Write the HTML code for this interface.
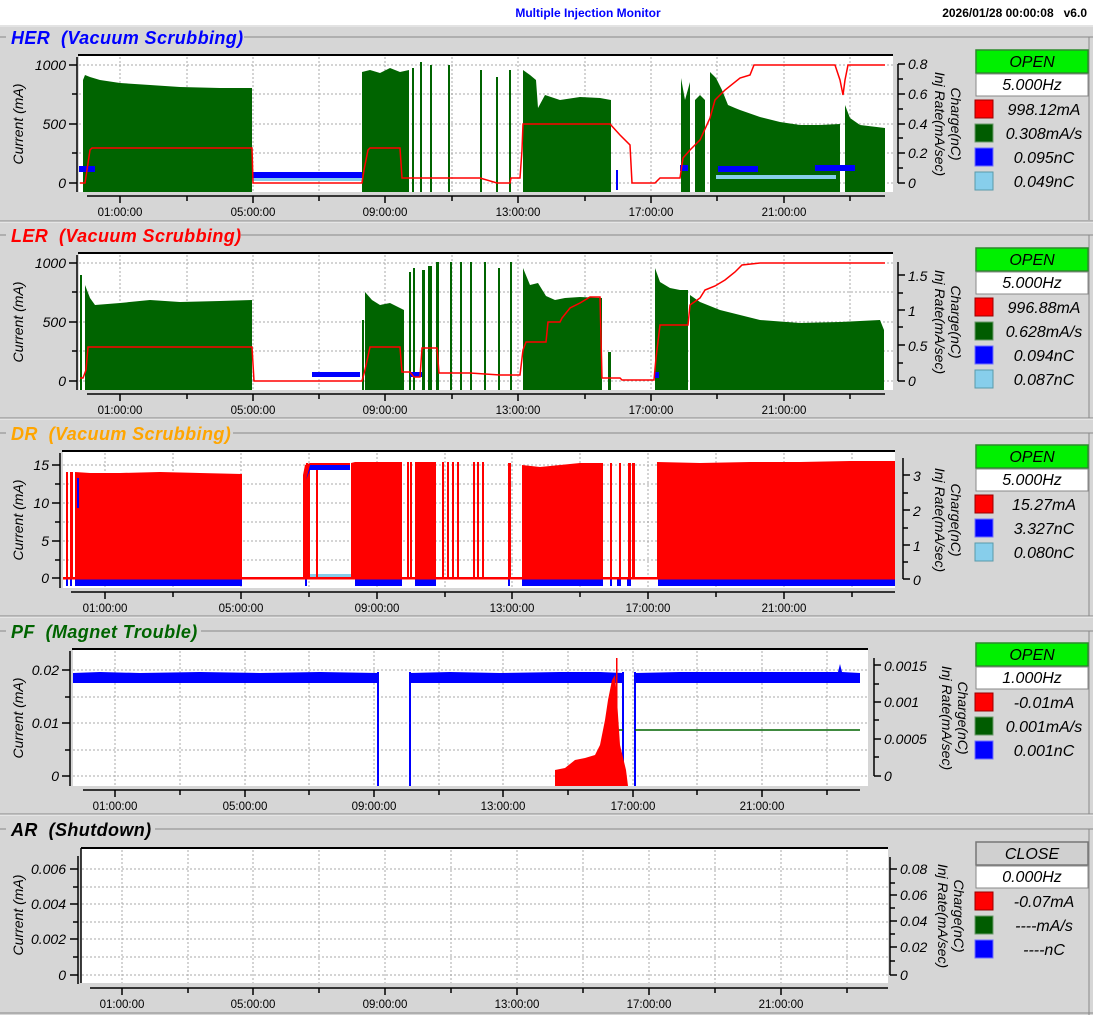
<!DOCTYPE html>
<html><head><meta charset="utf-8"><style>
html,body{margin:0;padding:0;background:#d6d6d6;width:1093px;height:1015px;overflow:hidden}
svg{display:block}
text{font-family:"Liberation Sans",sans-serif}
.t{font-size:18px;font-weight:bold;font-style:italic;letter-spacing:0.4px}
.yl{font-size:14px;font-style:italic}
.xl{font-size:11.5px}
.lg{font-size:16px;font-style:italic}
.ax{stroke:#000;stroke-width:1.5;fill:none}
.gr{stroke:#aaa;stroke-width:1;stroke-dasharray:2,2;fill:none}
</style></head><body>
<svg width="1093" height="1015" viewBox="0 0 1093 1015">
<rect x="0" y="0" width="1093" height="25" fill="#fff"/>
<text x="588" y="17" text-anchor="middle" style="font-size:12px;font-weight:bold" fill="#0000ff">Multiple Injection Monitor</text>
<text x="1087" y="17" text-anchor="end" style="font-size:12px;font-weight:bold">2026/01/28 00:00:08&#160;&#160;&#160;v6.0</text>

<!-- ===== HER ===== -->
<g>
<line x1="0" y1="26" x2="1093" y2="26" stroke="#f0f0f0"/>
<line x1="0" y1="37" x2="6" y2="37" stroke="#888"/><line x1="244" y1="37" x2="1093" y2="37" stroke="#888"/>
<line x1="1089" y1="37" x2="1089" y2="220" stroke="#888"/>
<text x="11" y="44" class="t" fill="#0000ff">HER&#160;&#160;(Vacuum Scrubbing)</text>
<rect x="79" y="56" width="814" height="136" fill="#fff"/>
<line x1="78" y1="55" x2="893" y2="55" stroke="#000" stroke-width="2"/>
<g class="gr"><path d="M120 57V192M187 57V192M253 57V192M319 57V192M385 57V192M452 57V192M518 57V192M585 57V192M651 57V192M717 57V192M784 57V192M850 57V192M79 65H893M79 94H893M79 124H893M79 153H893M79 183H893"/></g>
<g fill="#006400">
<path d="M83 192V80L85 75 90 77 100 80 120 83 150 85 180 87 220 88 252 88V192Z"/>
<path d="M362 192V72L370 70 380 73 390 68 400 72 409 70V192Z"/>
<rect x="412" y="68" width="2" height="124"/><rect x="420" y="62" width="2" height="130"/><rect x="430" y="65" width="2" height="127"/><rect x="448" y="65" width="2" height="127"/><rect x="480" y="70" width="2" height="122"/><rect x="496" y="77" width="2" height="115"/><rect x="509" y="70" width="2" height="122"/>
<path d="M523 192V70L530 75 536 80 538 108 545 95 560 100 580 97 600 98 611 100V192Z"/>
<path d="M681 192V78L685 100 690 82V192ZM695 192V100L700 95 705 100V192ZM710 192V72L716 78 722 90 728 105 735 108 740 110 760 117 780 122 800 125 820 125 840 124V192ZM845 192V105L850 118 860 125 885 128V192Z"/>
</g>
<g fill="#0000ff"><rect x="79" y="166" width="16" height="6"/><rect x="252" y="172" width="110" height="6"/><rect x="680" y="165" width="8" height="6"/><rect x="718" y="166" width="40" height="6"/><rect x="815" y="165" width="40" height="6"/><rect x="616" y="170" width="2" height="20"/></g>
<g fill="#87ceeb"><rect x="252" y="178" width="110" height="3"/><rect x="716" y="175" width="120" height="4"/></g>
<polyline fill="none" stroke="#f00" stroke-width="1.5" points="80,183 85,183 87,170 90,150 92,148 252,148 253,183 362,183 364,170 368,150 370,148 400,148 402,178 480,178 497,183 510,183 511,178 520,178 522,150 523,124 610,124 620,135 630,145 632,183 655,183 660,178 680,178 683,158 690,150 700,140 710,118 715,100 725,90 740,78 750,75 754,65 835,65 840,80 843,95 845,80 848,65 885,65"/>
<line x1="77" y1="57" x2="77" y2="192" class="ax"/>
<path d="M69 65H77M72 94H77M69 124H77M72 153H77M69 183H77" class="ax"/>
<text x="66" y="70" class="yl" text-anchor="end">1000</text><text x="66" y="129" class="yl" text-anchor="end">500</text><text x="66" y="188" class="yl" text-anchor="end">0</text>
<text transform="translate(23,124) rotate(-90)" class="yl" text-anchor="middle">Current (mA)</text>
<line x1="87" y1="196" x2="885" y2="196" class="ax"/>
<path d="M120 196V203M187 196V201M253 196V203M319 196V201M385 196V203M452 196V201M518 196V203M585 196V201M651 196V203M717 196V201M784 196V203M850 196V201" class="ax"/>
<text x="120" y="216" class="xl" text-anchor="middle">01:00:00</text><text x="253" y="216" class="xl" text-anchor="middle">05:00:00</text><text x="385" y="216" class="xl" text-anchor="middle">09:00:00</text><text x="518" y="216" class="xl" text-anchor="middle">13:00:00</text><text x="651" y="216" class="xl" text-anchor="middle">17:00:00</text><text x="784" y="216" class="xl" text-anchor="middle">21:00:00</text>
<line x1="898" y1="64" x2="898" y2="183" class="ax"/>
<path d="M898 64H905M898 79H903M898 94H905M898 109H903M898 124H905M898 138H903M898 153H905M898 168H903M898 183H905" class="ax"/>
<text x="908" y="69" class="yl">0.8</text><text x="908" y="99" class="yl">0.6</text><text x="908" y="129" class="yl">0.4</text><text x="908" y="158" class="yl">0.2</text><text x="908" y="188" class="yl">0</text>
<text transform="translate(935,124) rotate(90)" class="yl" text-anchor="middle">Inj Rate(mA/sec)</text>
<text transform="translate(951,124) rotate(90)" class="yl" text-anchor="middle">Charge(nC)</text>
<rect x="976" y="50" width="112" height="23" fill="#00f000" stroke="#2a8a2a" stroke-width="1.5"/>
<text x="1032" y="67" class="lg" text-anchor="middle">OPEN</text>
<rect x="976" y="74" width="112" height="22" fill="#fff" stroke="#888" stroke-width="1"/>
<text x="1032" y="90" class="lg" text-anchor="middle">5.000Hz</text>
<rect x="975" y="100" width="18" height="18" fill="#f00" stroke="#900"/><text x="1044" y="115" class="lg" text-anchor="middle">998.12mA</text>
<rect x="975" y="124" width="18" height="18" fill="#005c00" stroke="#6a9a6a"/><text x="1044" y="139" class="lg" text-anchor="middle">0.308mA/s</text>
<rect x="975" y="148" width="18" height="18" fill="#00f" stroke="#7070ff"/><text x="1044" y="163" class="lg" text-anchor="middle">0.095nC</text>
<rect x="975" y="172" width="18" height="18" fill="#87ceeb" stroke="#5a9aaa"/><text x="1044" y="187" class="lg" text-anchor="middle">0.049nC</text>
</g>

<!-- ===== LER ===== -->
<g>
<line x1="0" y1="221" x2="1093" y2="221" stroke="#888"/><line x1="0" y1="222" x2="1093" y2="222" stroke="#f4f4f4"/>
<line x1="0" y1="235" x2="6" y2="235" stroke="#888"/><line x1="241" y1="235" x2="1093" y2="235" stroke="#888"/>
<line x1="1089" y1="235" x2="1089" y2="418" stroke="#888"/>
<text x="11" y="242" class="t" fill="#ff0000">LER&#160;&#160;(Vacuum Scrubbing)</text>
<rect x="79" y="254" width="814" height="136" fill="#fff"/>
<line x1="78" y1="253" x2="893" y2="253" stroke="#000" stroke-width="2"/>
<g class="gr"><path d="M120 255V390M187 255V390M253 255V390M319 255V390M385 255V390M452 255V390M518 255V390M585 255V390M651 255V390M717 255V390M784 255V390M850 255V390M79 263H893M79 292H893M79 322H893M79 351H893M79 381H893"/></g>
<g fill="#006400">
<rect x="80" y="275" width="2" height="115"/>
<path d="M85 390V285L90 298 95 305 120 303 150 300 180 302 220 301 252 300V390Z"/>
<rect x="362" y="320" width="2" height="70"/>
<path d="M365 390V292L372 300 380 305 390 303 404 310V390Z"/>
<rect x="409" y="272" width="2" height="118"/><rect x="413" y="268" width="2" height="122"/><rect x="422" y="270" width="3" height="120"/><rect x="428" y="266" width="4" height="124"/><rect x="436" y="262" width="3" height="128"/><rect x="450" y="262" width="2" height="128"/><rect x="460" y="262" width="2" height="128"/><rect x="470" y="262" width="2" height="128"/><rect x="484" y="262" width="2" height="128"/><rect x="498" y="268" width="2" height="122"/><rect x="510" y="262" width="2" height="128"/>
<path d="M523 390V268L530 285 538 283 546 296 555 300 565 298 580 297 602 298V390Z"/>
<rect x="608" y="352" width="3" height="38"/>
<path d="M655 390V268L660 282 670 288 680 290 688 290V390ZM690 390V295L700 302 720 310 740 315 760 320 800 323 840 322 880 320 884 330V390Z"/>
</g>
<g fill="#0000ff"><rect x="312" y="372" width="48" height="5"/><rect x="410" y="372" width="12" height="5"/><rect x="655" y="372" width="4" height="6"/></g>
<polyline fill="none" stroke="#f00" stroke-width="1.5" points="80,378 83,378 86,370 88,347 252,347 254,381 362,381 365,370 370,347 400,347 402,372 410,372 414,377 420,377 422,348 437,348 439,373 470,373 500,375 520,375 523,350 526,342 546,342 548,322 560,322 562,318 570,308 580,303 590,297 600,297 602,378 620,378 622,380 654,380 656,358 660,325 688,325 690,305 700,298 705,290 715,286 725,280 735,272 742,265 760,263 885,263"/>
<line x1="77" y1="255" x2="77" y2="390" class="ax"/>
<path d="M69 263H77M72 292H77M69 322H77M72 351H77M69 381H77" class="ax"/>
<text x="66" y="268" class="yl" text-anchor="end">1000</text><text x="66" y="327" class="yl" text-anchor="end">500</text><text x="66" y="386" class="yl" text-anchor="end">0</text>
<text transform="translate(23,322) rotate(-90)" class="yl" text-anchor="middle">Current (mA)</text>
<line x1="87" y1="394" x2="885" y2="394" class="ax"/>
<path d="M120 394V401M187 394V399M253 394V401M319 394V399M385 394V401M452 394V399M518 394V401M585 394V399M651 394V401M717 394V399M784 394V401M850 394V399" class="ax"/>
<text x="120" y="414" class="xl" text-anchor="middle">01:00:00</text><text x="253" y="414" class="xl" text-anchor="middle">05:00:00</text><text x="385" y="414" class="xl" text-anchor="middle">09:00:00</text><text x="518" y="414" class="xl" text-anchor="middle">13:00:00</text><text x="651" y="414" class="xl" text-anchor="middle">17:00:00</text><text x="784" y="414" class="xl" text-anchor="middle">21:00:00</text>
<line x1="898" y1="262" x2="898" y2="381" class="ax"/>
<path d="M898 275H905M898 293H903M898 310H905M898 327H903M898 345H905M898 363H903M898 381H905" class="ax"/>
<text x="908" y="281" class="yl">1.5</text><text x="908" y="316" class="yl">1</text><text x="908" y="351" class="yl">0.5</text><text x="908" y="386" class="yl">0</text>
<text transform="translate(935,322) rotate(90)" class="yl" text-anchor="middle">Inj Rate(mA/sec)</text>
<text transform="translate(951,322) rotate(90)" class="yl" text-anchor="middle">Charge(nC)</text>
<rect x="976" y="248" width="112" height="23" fill="#00f000" stroke="#2a8a2a" stroke-width="1.5"/>
<text x="1032" y="265" class="lg" text-anchor="middle">OPEN</text>
<rect x="976" y="272" width="112" height="22" fill="#fff" stroke="#888"/>
<text x="1032" y="288" class="lg" text-anchor="middle">5.000Hz</text>
<rect x="975" y="298" width="18" height="18" fill="#f00" stroke="#900"/><text x="1044" y="313" class="lg" text-anchor="middle">996.88mA</text>
<rect x="975" y="322" width="18" height="18" fill="#005c00" stroke="#6a9a6a"/><text x="1044" y="337" class="lg" text-anchor="middle">0.628mA/s</text>
<rect x="975" y="346" width="18" height="18" fill="#00f" stroke="#7070ff"/><text x="1044" y="361" class="lg" text-anchor="middle">0.094nC</text>
<rect x="975" y="370" width="18" height="18" fill="#87ceeb" stroke="#5a9aaa"/><text x="1044" y="385" class="lg" text-anchor="middle">0.087nC</text>
</g>

<!-- ===== DR ===== -->
<g>
<line x1="0" y1="418" x2="1093" y2="418" stroke="#888"/><line x1="0" y1="419" x2="1093" y2="419" stroke="#f4f4f4"/>
<line x1="0" y1="433" x2="6" y2="433" stroke="#888"/><line x1="233" y1="433" x2="1093" y2="433" stroke="#888"/>
<line x1="1089" y1="433" x2="1089" y2="616" stroke="#888"/>
<text x="11" y="440" class="t" fill="#ffa500">DR&#160;&#160;(Vacuum Scrubbing)</text>
<rect x="63" y="452" width="832" height="136" fill="#fff"/>
<line x1="62" y1="451" x2="895" y2="451" stroke="#000" stroke-width="2"/>
<g class="gr"><path d="M105 453V588M173 453V588M241 453V588M309 453V588M377 453V588M445 453V588M512 453V588M580 453V588M648 453V588M716 453V588M784 453V588M852 453V588M63 465H895M63 484H895M63 503H895M63 522H895M63 541H895M63 560H895M63 578H895"/></g>
<g fill="#0000ff"><rect x="66" y="578" width="2" height="8"/><rect x="70" y="578" width="2" height="8"/><rect x="75" y="578" width="167" height="8"/><rect x="305" y="578" width="2" height="8"/><rect x="355" y="578" width="47" height="8"/><rect x="415" y="578" width="21" height="8"/><rect x="508" y="578" width="2" height="8"/><rect x="522" y="578" width="81" height="8"/><rect x="610" y="578" width="2" height="8"/><rect x="617" y="578" width="4" height="8"/><rect x="627" y="578" width="4" height="8"/><rect x="658" y="578" width="237" height="8"/></g>
<rect x="303" y="574" width="52" height="3" fill="#87ceeb"/>
<g fill="#f00">
<rect x="63" y="577" width="832" height="2.5"/>
<rect x="66" y="472" width="2" height="106"/><rect x="70" y="472" width="3" height="106"/>
<path d="M75 578V472L90 473 120 473 160 472 200 473 242 474V578Z"/>
<path d="M303 578V475L305 465 310 463 350 463V468L345 466 310 466V578Z"/>
<rect x="306" y="463" width="2" height="115"/><rect x="316" y="463" width="2" height="115"/>
<path d="M351 578V463L355 462 380 462 402 462V578Z"/>
<rect x="407" y="462" width="2" height="116"/><rect x="410" y="462" width="2" height="116"/>
<path d="M415 578V462L436 462V578Z"/>
<rect x="442" y="462" width="2" height="116"/><rect x="447" y="462" width="2" height="116"/><rect x="452" y="462" width="2" height="116"/><rect x="457" y="462" width="2" height="116"/><rect x="473" y="462" width="2" height="116"/><rect x="477" y="462" width="2" height="116"/><rect x="482" y="462" width="2" height="116"/><rect x="508" y="463" width="3" height="115"/>
<path d="M522 578V465L540 467 560 465 580 463 603 463V578Z"/>
<rect x="610" y="463" width="2" height="115"/><rect x="619" y="463" width="2" height="115"/><rect x="628" y="463" width="3" height="115"/><rect x="632" y="463" width="3" height="115"/>
<path d="M657 578V462L700 463 750 462 800 462 850 461 895 461V578Z"/>
</g>
<path d="M306 480L310 465 350 465 350 470 310 470Z" fill="#0000ff"/>
<rect x="77" y="478" width="2" height="30" fill="#00f"/>
<line x1="60" y1="453" x2="60" y2="588" class="ax"/>
<path d="M52 465H60M55 484H60M52 503H60M55 522H60M52 541H60M55 560H60M52 578H60" class="ax"/>
<text x="49" y="470" class="yl" text-anchor="end">15</text><text x="49" y="508" class="yl" text-anchor="end">10</text><text x="49" y="546" class="yl" text-anchor="end">5</text><text x="49" y="583" class="yl" text-anchor="end">0</text>
<text transform="translate(23,520) rotate(-90)" class="yl" text-anchor="middle">Current (mA)</text>
<line x1="71" y1="592" x2="895" y2="592" class="ax"/>
<path d="M105 592V599M173 592V597M241 592V599M309 592V597M377 592V599M445 592V597M512 592V599M580 592V597M648 592V599M716 592V597M784 592V599M852 592V597" class="ax"/>
<text x="105" y="612" class="xl" text-anchor="middle">01:00:00</text><text x="241" y="612" class="xl" text-anchor="middle">05:00:00</text><text x="377" y="612" class="xl" text-anchor="middle">09:00:00</text><text x="512" y="612" class="xl" text-anchor="middle">13:00:00</text><text x="648" y="612" class="xl" text-anchor="middle">17:00:00</text><text x="784" y="612" class="xl" text-anchor="middle">21:00:00</text>
<line x1="903" y1="458" x2="903" y2="579" class="ax"/>
<path d="M903 475H910M903 493H908M903 510H910M903 528H908M903 545H910M903 562H908M903 579H910" class="ax"/>
<text x="913" y="481" class="yl">3</text><text x="913" y="516" class="yl">2</text><text x="913" y="551" class="yl">1</text><text x="913" y="585" class="yl">0</text>
<text transform="translate(935,520) rotate(90)" class="yl" text-anchor="middle">Inj Rate(mA/sec)</text>
<text transform="translate(951,520) rotate(90)" class="yl" text-anchor="middle">Charge(nC)</text>
<rect x="976" y="445" width="112" height="23" fill="#00f000" stroke="#2a8a2a" stroke-width="1.5"/>
<text x="1032" y="462" class="lg" text-anchor="middle">OPEN</text>
<rect x="976" y="469" width="112" height="22" fill="#fff" stroke="#888"/>
<text x="1032" y="485" class="lg" text-anchor="middle">5.000Hz</text>
<rect x="975" y="495" width="18" height="18" fill="#f00" stroke="#900"/><text x="1044" y="510" class="lg" text-anchor="middle">15.27mA</text>
<rect x="975" y="519" width="18" height="18" fill="#00f" stroke="#7070ff"/><text x="1044" y="534" class="lg" text-anchor="middle">3.327nC</text>
<rect x="975" y="543" width="18" height="18" fill="#87ceeb" stroke="#5a9aaa"/><text x="1044" y="558" class="lg" text-anchor="middle">0.080nC</text>
</g>

<!-- ===== PF ===== -->
<g>
<line x1="0" y1="616" x2="1093" y2="616" stroke="#888"/><line x1="0" y1="617" x2="1093" y2="617" stroke="#f4f4f4"/>
<line x1="0" y1="631" x2="6" y2="631" stroke="#888"/><line x1="201" y1="631" x2="1093" y2="631" stroke="#888"/>
<line x1="1089" y1="631" x2="1089" y2="814" stroke="#888"/>
<text x="11" y="638" class="t" fill="#006400">PF&#160;&#160;(Magnet Trouble)</text>
<rect x="73" y="650" width="795" height="136" fill="#fff"/>
<line x1="72" y1="649" x2="868" y2="649" stroke="#000" stroke-width="2"/>
<g class="gr"><path d="M115 651V786M180 651V786M245 651V786M309 651V786M374 651V786M439 651V786M503 651V786M568 651V786M633 651V786M697 651V786M762 651V786M827 651V786M73 670H868M73 697H868M73 723H868M73 750H868M73 776H868"/></g>
<g fill="#0000ff">
<path d="M73 683V673L100 672 140 673 200 672 260 673 320 672 378 673V683Z"/>
<path d="M410 683V673L450 672 500 673 560 672 600 672 623 673V683Z"/>
<path d="M636 683V673L680 672 740 672 800 672 838 672 840 664 842 672 860 673V683Z"/>
<rect x="377" y="672" width="2" height="114"/><rect x="409" y="672" width="2" height="114"/><rect x="622" y="672" width="2" height="114"/><rect x="634" y="672" width="2" height="114"/>
</g>
<path d="M605 786V745L610 735 615 740 617 745V786Z" fill="#006400"/>
<line x1="616" y1="730" x2="623" y2="730" stroke="#006400" stroke-width="1.5"/>
<line x1="635" y1="730" x2="860" y2="730" stroke="#006400" stroke-width="1.5"/>
<path d="M555 786V770L565 768 575 760 585 758 595 755 600 745 605 720 608 700 612 680 615 675 617 700 620 745 626 770 628 786Z" fill="#f00"/>
<rect x="616" y="658" width="1.5" height="128" fill="#f00"/>
<line x1="70" y1="651" x2="70" y2="786" class="ax"/>
<path d="M62 670H70M65 697H70M62 723H70M65 750H70M62 776H70" class="ax"/>
<text x="59" y="675" class="yl" text-anchor="end">0.02</text><text x="59" y="728" class="yl" text-anchor="end">0.01</text><text x="59" y="781" class="yl" text-anchor="end">0</text>
<text transform="translate(23,718) rotate(-90)" class="yl" text-anchor="middle">Current (mA)</text>
<line x1="83" y1="790" x2="860" y2="790" class="ax"/>
<path d="M115 790V797M180 790V795M245 790V797M309 790V795M374 790V797M439 790V795M503 790V797M568 790V795M633 790V797M697 790V795M762 790V797M827 790V795" class="ax"/>
<text x="115" y="810" class="xl" text-anchor="middle">01:00:00</text><text x="245" y="810" class="xl" text-anchor="middle">05:00:00</text><text x="374" y="810" class="xl" text-anchor="middle">09:00:00</text><text x="503" y="810" class="xl" text-anchor="middle">13:00:00</text><text x="633" y="810" class="xl" text-anchor="middle">17:00:00</text><text x="762" y="810" class="xl" text-anchor="middle">21:00:00</text>
<line x1="874" y1="658" x2="874" y2="776" class="ax"/>
<path d="M874 665H881M874 684H879M874 702H881M874 720H879M874 739H881M874 757H879M874 776H881" class="ax"/>
<text x="884" y="671" class="yl">0.0015</text><text x="884" y="707" class="yl">0.001</text><text x="884" y="744" class="yl">0.0005</text><text x="884" y="781" class="yl">0</text>
<text transform="translate(942,718) rotate(90)" class="yl" text-anchor="middle">Inj Rate(mA/sec)</text>
<text transform="translate(958,718) rotate(90)" class="yl" text-anchor="middle">Charge(nC)</text>
<rect x="976" y="643" width="112" height="23" fill="#00f000" stroke="#2a8a2a" stroke-width="1.5"/>
<text x="1032" y="660" class="lg" text-anchor="middle">OPEN</text>
<rect x="976" y="667" width="112" height="22" fill="#fff" stroke="#888"/>
<text x="1032" y="683" class="lg" text-anchor="middle">1.000Hz</text>
<rect x="975" y="693" width="18" height="18" fill="#f00" stroke="#900"/><text x="1044" y="708" class="lg" text-anchor="middle">-0.01mA</text>
<rect x="975" y="717" width="18" height="18" fill="#005c00" stroke="#6a9a6a"/><text x="1044" y="732" class="lg" text-anchor="middle">0.001mA/s</text>
<rect x="975" y="741" width="18" height="18" fill="#00f" stroke="#7070ff"/><text x="1044" y="756" class="lg" text-anchor="middle">0.001nC</text>
</g>

<!-- ===== AR ===== -->
<g>
<line x1="0" y1="814" x2="1093" y2="814" stroke="#888"/><line x1="0" y1="815" x2="1093" y2="815" stroke="#f4f4f4"/>
<line x1="0" y1="829" x2="6" y2="829" stroke="#888"/><line x1="155" y1="829" x2="1093" y2="829" stroke="#888"/>
<line x1="1089" y1="829" x2="1089" y2="1015" stroke="#888"/>
<line x1="0" y1="1013" x2="1093" y2="1013" stroke="#888"/>
<text x="11" y="836" class="t" fill="#000">AR&#160;&#160;(Shutdown)</text>
<rect x="81" y="849" width="807" height="134" fill="#fff"/>
<line x1="81" y1="848" x2="888" y2="848" stroke="#000" stroke-width="2"/>
<line x1="81" y1="848" x2="81" y2="983" stroke="#000" stroke-width="1.5"/>
<g class="gr"><path d="M122 850V983M188 850V983M253 850V983M319 850V983M385 850V983M451 850V983M517 850V983M583 850V983M649 850V983M715 850V983M781 850V983M847 850V983M82 869H888M82 887H888M82 904H888M82 922H888M82 939H888M82 957H888M82 975H888"/></g>
<line x1="78" y1="856" x2="78" y2="984" class="ax"/>
<path d="M70 869H78M73 887H78M70 904H78M73 922H78M70 939H78M73 957H78M70 975H78" class="ax"/>
<text x="66" y="874" class="yl" text-anchor="end">0.006</text><text x="66" y="909" class="yl" text-anchor="end">0.004</text><text x="66" y="944" class="yl" text-anchor="end">0.002</text><text x="66" y="980" class="yl" text-anchor="end">0</text>
<text transform="translate(23,915) rotate(-90)" class="yl" text-anchor="middle">Current (mA)</text>
<line x1="90" y1="988" x2="888" y2="988" class="ax"/>
<path d="M122 988V995M188 988V993M253 988V995M319 988V993M385 988V995M451 988V993M517 988V995M583 988V993M649 988V995M715 988V993M781 988V995M847 988V993" class="ax"/>
<text x="122" y="1008" class="xl" text-anchor="middle">01:00:00</text><text x="253" y="1008" class="xl" text-anchor="middle">05:00:00</text><text x="385" y="1008" class="xl" text-anchor="middle">09:00:00</text><text x="517" y="1008" class="xl" text-anchor="middle">13:00:00</text><text x="649" y="1008" class="xl" text-anchor="middle">17:00:00</text><text x="781" y="1008" class="xl" text-anchor="middle">21:00:00</text>
<line x1="890" y1="857" x2="890" y2="975" class="ax"/>
<path d="M890 869H897M890 883H895M890 895H897M890 908H895M890 921H897M890 934H895M890 947H897M890 961H895M890 975H897" class="ax"/>
<text x="900" y="874" class="yl">0.08</text><text x="900" y="900" class="yl">0.06</text><text x="900" y="926" class="yl">0.04</text><text x="900" y="952" class="yl">0.02</text><text x="900" y="980" class="yl">0</text>
<text transform="translate(938,916) rotate(90)" class="yl" text-anchor="middle">Inj Rate(mA/sec)</text>
<text transform="translate(954,916) rotate(90)" class="yl" text-anchor="middle">Charge(nC)</text>
<rect x="976" y="842" width="112" height="23" fill="#d0d0d0" stroke="#777" stroke-width="1.5"/>
<text x="1032" y="859" class="lg" text-anchor="middle">CLOSE</text>
<rect x="976" y="866" width="112" height="22" fill="#fff" stroke="#888"/>
<text x="1032" y="882" class="lg" text-anchor="middle">0.000Hz</text>
<rect x="975" y="892" width="18" height="18" fill="#f00" stroke="#900"/><text x="1044" y="907" class="lg" text-anchor="middle">-0.07mA</text>
<rect x="975" y="916" width="18" height="18" fill="#005c00" stroke="#6a9a6a"/><text x="1044" y="931" class="lg" text-anchor="middle">----mA/s</text>
<rect x="975" y="940" width="18" height="18" fill="#00f" stroke="#7070ff"/><text x="1044" y="955" class="lg" text-anchor="middle">----nC</text>
</g>
</svg>
</body></html>
